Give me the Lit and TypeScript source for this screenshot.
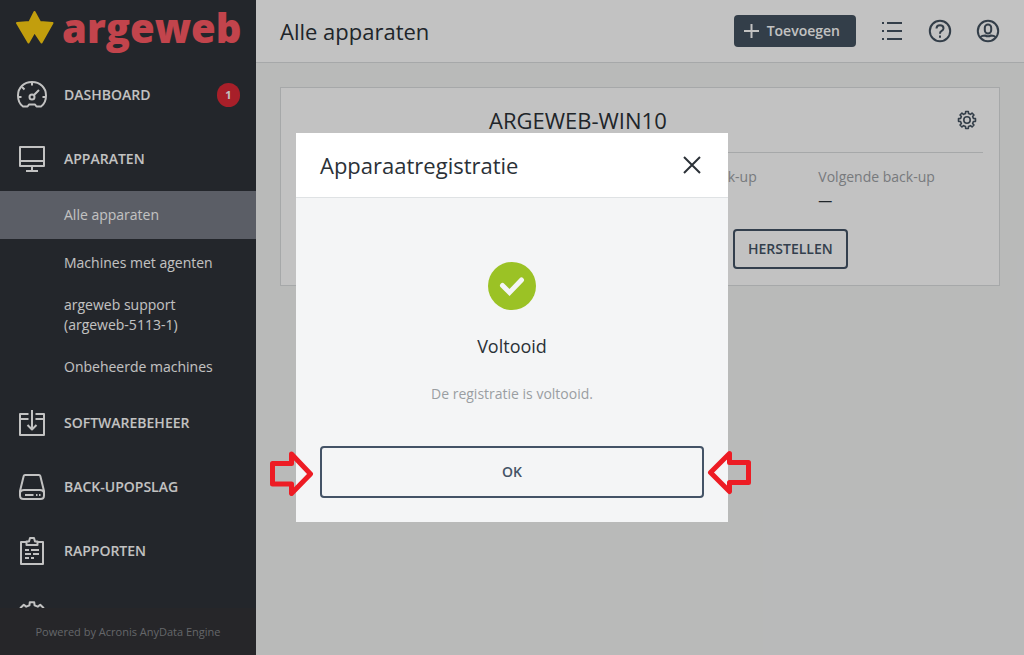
import { LitElement, html, svg, css } from "lit";
import { customElement, property } from "lit/decorators.js";

const gearPath = (cx: number, cy: number, outer: number, inner: number, teeth = 8) => {
  const points: string[] = [];
  const step = (Math.PI * 2) / teeth;
  for (let i = 0; i < teeth; i++) {
    const a = i * step - Math.PI / 2;
    for (const [offset, r] of [[-0.3, inner], [-0.2, outer], [0.2, outer], [0.3, inner]]) {
      const t = a + offset * step;
      points.push(`${(cx + Math.cos(t) * r).toFixed(2)} ${(cy + Math.sin(t) * r).toFixed(2)}`);
    }
  }
  return `M${points.join("L")}Z`;
};

const icons: Record<string, unknown> = {
  dashboard: svg`
    <path d="M7 27.500C3.500 25 2 21 2 16.500C2 8.500 8 3 16 3s14 5.500 14 13.500c0 4.500-1.500 8.500-5 11h-4.500l-1.500-2h-6l-1.500 2z"/>
    <circle cx="16" cy="18" r="2.500"/><path d="M18 16l5-5M16 3v3.500M2 18h3.500M26.500 18H30M6 8l2.500 2.500"/>`,
  devices: svg`<path d="M4 4h24v19H4zM4 18h24M16 23v5M10 28h12"/>`,
  software: svg`<path d="M12.500 7H4v21h24V7h-8.500M4 12h8.500M19.500 12H28M16 3v19M11.500 18l4.500 4.500l4.500-4.500"/>`,
  storage: svg`
    <path d="M9 4h14q1 0 1.300 1L28 20v4.500q0 3.500-3.500 3.500h-17Q4 28 4 24.500V20L7.700 5Q8 4 9 4zM4 21.500Q5 19 8 19h16q3 0 4 2.500M9 24h8.500M20 24h1.500M23 24h1.500"/>`,
  reports: svg`
    <path d="M10 7H5v22h22V7h-5M10.500 10V6.500H13L14 3h4l1 3.500h2.500V10z"/>
    <path d="M9 15h4M15 15h8M9 19h6M17 19h6M9 23h4M15 23h3"/>`,
  settings: svg`<path d=${gearPath(16, 17, 14, 11)}/><circle cx="16" cy="17" r="5"/>`,
};

@customElement("nav-entry")
class NavEntry extends LitElement {
  @property() icon = "";
  @property() label = "";
  @property({ type: Number }) count = 0;

  static styles = css`
    :host { display: block; }
    .link {
      display: flex; align-items: center; gap: 16px; height: 64px; padding: 0 16px;
      box-sizing: border-box; color: #fff; text-decoration: none;
      font-size: 14px; line-height: 20px; font-weight: 600;
    }
    .icon { width: 32px; height: 32px; fill: none; stroke: currentColor; stroke-width: 2; stroke-linejoin: round; flex: none; }
    .label { flex: 1; }
    .badge {
      width: 23px; height: 24px; line-height: 24px; border-radius: 12px; background: #dd2a37;
      text-align: center; font-size: 11px; font-weight: 700;
    }
  `;

  render() {
    return html`<a class="link" href="#">
      <svg class="icon" viewBox="0 0 32 32" aria-hidden="true">${icons[this.icon]}</svg>
      <span class="label">${this.label}</span>
      ${this.count ? html`<span class="badge">${this.count}</span>` : ""}
    </a>`;
  }
}

@customElement("app-root")
class AppRoot extends LitElement {
  static styles = css`
    :host {
      display: flex; height: 100vh; overflow: hidden; position: relative;
      font-family: "Open Sans", "Noto Sans", sans-serif; font-size: 14px; line-height: 20px; color: #2b3137;
    }
    button { font: inherit; color: inherit; background: none; border: 0; padding: 0; cursor: pointer; }
    svg { display: block; }
    h1, h2, h3, p, ul, dl, dd { margin: 0; padding: 0; font-weight: 400; }

    .sidebar { width: 256px; flex: none; display: flex; flex-direction: column; background: #2f3339; color: #fff; }
    .brand {
      display: flex; align-items: center; gap: 8px; height: 63px; padding: 0 16px; flex: none;
      box-sizing: border-box; text-decoration: none; color: #ff5a64;
    }
    .star { width: 38px; height: 38px; margin-bottom: 8px; fill: #ffd012; stroke: #ffd012; stroke-width: 2; stroke-linejoin: round; flex: none; }
    .brand-name { font-size: 40px; line-height: 56px; padding-bottom: 8px; font-weight: 800; }
    .nav { flex: 1; min-height: 0; overflow: hidden; }
    .sub { list-style: none; padding-bottom: 3px; }
    .sub-link { display: block; padding: 11px 32px 11px 64px; color: #fff; text-decoration: none; }
    .sub-link.active { background: #787c86; padding-top: 14px; padding-bottom: 14px; margin-bottom: 3px; }
    .powered { flex: none; padding: 14px 0 13px; background: #323337; color: #85878b; text-align: center; font-size: 11px; }

    .main { flex: 1; min-width: 0; background: #f3f5f4; }
    .topbar {
      display: flex; align-items: center; gap: 24px; height: 63px; padding: 0 24px; box-sizing: border-box;
      background: #fff; border-bottom: 1px solid #dadddf; color: #445260;
    }
    .page-title { flex: 1; font-size: 22px; line-height: 32px; color: #2b3137; }
    .add {
      display: flex; align-items: center; gap: 8px; height: 32px; padding: 0 16px 0 10px;
      border-radius: 4px; background: #445260; color: #fff; font-weight: 600;
    }
    .line-icon { fill: none; stroke: currentColor; stroke-width: 2; }
    .thin { stroke-width: 1.6; color: #445260; }

    .card {
      margin: 24px; padding: 16px 16px 16px 208px; background: #fff; border: 1px solid #dadddf;
    }
    .card-head {
      display: flex; align-items: center; justify-content: space-between;
      padding: 0 6px 16px 0; border-bottom: 1px solid #dadddf;
    }
    .card-title { font-size: 22px; line-height: 32px; }
    .facts { display: grid; grid-template-columns: repeat(3, 1fr); padding: 14px 0; }
    .fact { grid-column-start: 2; }
    .fact + .fact { grid-column-start: 3; }
    .fact dt { color: #9da1a5; line-height: 20px; }
    .fact dd { line-height: 28px; }
    .actions { display: grid; grid-template-columns: 228px auto; gap: 16px; justify-content: start; }
    .outlined { border: 2px solid #445366; border-radius: 4px; color: #445366; font-weight: 600; }
    .restore { grid-column: 2; height: 40px; padding: 0 13px; }

    .scrim { position: absolute; inset: 0; display: grid; place-items: center; background: rgb(0 0 0 / 0.24); }
    .dialog { width: 432px; background: #f4f5f6; }
    .dialog-head {
      display: flex; align-items: center; justify-content: space-between; height: 65px; padding: 0 24px;
      box-sizing: border-box; background: #fff; border-bottom: 1px solid #dfe2e4;
    }
    .dialog-title { font-size: 22px; line-height: 32px; }
    .dialog-body { display: flex; flex-direction: column; align-items: center; padding: 64px 24px 24px; }
    .status { font-size: 18px; line-height: 24px; margin-top: 24px; }
    .detail { color: #9a9ea2; margin-top: 26px; }
    .confirm { position: relative; align-self: stretch; margin-top: 42px; display: grid; }
    .ok { height: 52px; }
    .arrow { position: absolute; top: 4px; width: 44px; height: 46px; fill: none; stroke: #ed1c24; stroke-width: 5; stroke-linejoin: round; }
    .arrow.start { left: -50px; }
    .arrow.end { right: -47px; }
  `;

  render() {
    return html`
      <aside class="sidebar">
        <a class="brand" href="#">
          <svg class="star" viewBox="0 0 38 38" aria-hidden="true">
            <path d="M18.500 3L24 13L36.500 14L25.500 33.500L18.500 23L12.500 33.500L1 14L13.500 13Z" />
          </svg>
          <span class="brand-name">argeweb</span>
        </a>
        <nav class="nav">
          <nav-entry icon="dashboard" label="DASHBOARD" count="1"></nav-entry>
          <nav-entry icon="devices" label="APPARATEN"></nav-entry>
          <ul class="sub">
            <li><a class="sub-link active" href="#">Alle apparaten</a></li>
            <li><a class="sub-link" href="#">Machines met agenten</a></li>
            <li><a class="sub-link" href="#">argeweb support<br />(argeweb-5113-1)</a></li>
            <li><a class="sub-link" href="#">Onbeheerde machines</a></li>
          </ul>
          <nav-entry icon="software" label="SOFTWAREBEHEER"></nav-entry>
          <nav-entry icon="storage" label="BACK-UPOPSLAG"></nav-entry>
          <nav-entry icon="reports" label="RAPPORTEN"></nav-entry>
          <nav-entry icon="settings"></nav-entry>
        </nav>
        <footer class="powered">Powered by Acronis AnyData Engine</footer>
      </aside>

      <main class="main">
        <header class="topbar">
          <h1 class="page-title">Alle apparaten</h1>
          <button class="add">
            <svg class="line-icon" width="15" height="14" viewBox="0 0 15 14"><path d="M7.500 0v14M0 7h15" /></svg>
            Toevoegen
          </button>
          <button>
            <svg class="line-icon" width="24" height="24" viewBox="0 0 24 24">
              <path d="M2 4h2M7 4h15M2 12h2M7 12h15M2 20h2M7 20h15" />
            </svg>
          </button>
          <button>
            <svg class="line-icon" width="24" height="24" viewBox="0 0 24 24">
              <circle cx="12" cy="12" r="10.200" />
              <path d="M8.500 9.500q0-3.300 3.500-3.300t3.500 3q0 1.600-1.800 2.600T12 14.700M12 16.500v2.200" />
            </svg>
          </button>
          <button>
            <svg class="line-icon" width="24" height="24" viewBox="0 0 24 24">
              <circle cx="12" cy="12" r="10.200" />
              <rect x="8.800" y="5.500" width="6.400" height="9" rx="3.200" />
              <path d="M4.500 18q1.500-1.500 4.500-1.500q3 1.500 6 0q3 0 4.500 1.500" />
            </svg>
          </button>
        </header>

        <section class="card">
          <header class="card-head">
            <h2 class="card-title">ARGEWEB-WIN10</h2>
            <button>
              <svg class="line-icon thin" width="20" height="20" viewBox="0 0 20 20">
                <path stroke-linejoin="round" d=${gearPath(10, 10, 8.6, 6.6)} /><circle cx="10" cy="10" r="3.200" />
              </svg>
            </button>
          </header>
          <dl class="facts">
            <div class="fact"><dt>Laatste back-up</dt></div>
            <div class="fact"><dt>Volgende back-up</dt><dd>—</dd></div>
          </dl>
          <div class="actions"><button class="outlined restore">HERSTELLEN</button></div>
        </section>
      </main>

      <div class="scrim">
        <section class="dialog" role="dialog" aria-modal="true" aria-labelledby="dialog-title">
          <header class="dialog-head">
            <h2 class="dialog-title" id="dialog-title">Apparaatregistratie</h2>
            <button>
              <svg class="line-icon" width="24" height="24" viewBox="0 0 24 24"><path d="M4 4l16 16M20 4L4 20" /></svg>
            </button>
          </header>
          <div class="dialog-body">
            <svg width="48" height="48" viewBox="0 0 48 48" aria-hidden="true">
              <circle cx="24" cy="24" r="24" fill="#9bc225" />
              <path d="M14.500 23.500L21.500 30.500L33.500 18" fill="none" stroke="#f4f5f6" stroke-width="5" stroke-linecap="round" />
            </svg>
            <h3 class="status">Voltooid</h3>
            <p class="detail">De registratie is voltooid.</p>
            <div class="confirm">
              <button class="outlined ok">OK</button>
              <svg class="arrow start" viewBox="0 0 44 46" aria-hidden="true">
                <path d="M2.500 13.500H21.500V4L40.500 24L21.500 43.500V34H2.500Z" />
              </svg>
              <svg class="arrow end" viewBox="0 0 44 46" aria-hidden="true">
                <path d="M41.500 12.500H22.500V3.500L3.500 22.500L22.500 41.500V32.500H41.500Z" />
              </svg>
            </div>
          </div>
        </section>
      </div>
    `;
  }
}
